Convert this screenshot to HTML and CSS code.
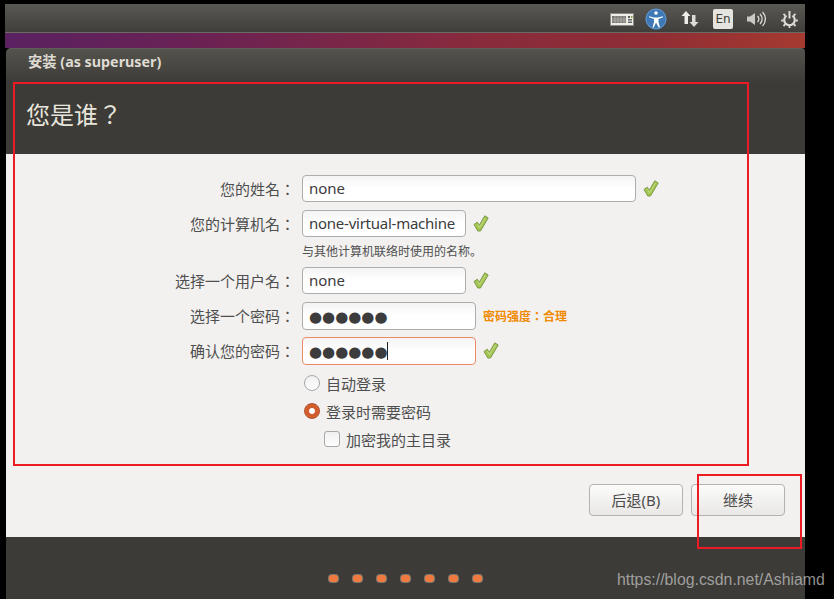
FILE: index.html
```html
<!DOCTYPE html>
<html lang="zh-Hant">
<head>
<meta charset="utf-8">
<title>安装</title>
<link rel="stylesheet" href="styles.css">
</head>
<body>
<div class="screen">
  <header class="panel">
    <svg class="ico kbd" viewBox="0 0 24 13"><rect x=".5" y=".5" width="23" height="12" fill="#eeede8" stroke="#8a8983"/><rect x="2" y="3" width="14" height="7" fill="#77766f"/><path d="M2 6h14M2 8h14M5 3v7M8 3v7M11 3v7M14 3v7" stroke="#c8c7c0" stroke-width=".6"/><rect x="18" y="3" width="2" height="2" fill="#555"/><rect x="21" y="3" width="1.500" height="2" fill="#7fa040"/><rect x="18" y="6" width="4" height="1.500" fill="#666"/><rect x="18" y="8.500" width="4" height="1.500" fill="#666"/></svg>
    <svg class="ico a11y" viewBox="0 0 22 22"><circle cx="11" cy="11" r="10.500" fill="#3f79b5"/><circle cx="11" cy="11" r="10" fill="none" stroke="#6ea0d2" stroke-width=".8"/><circle cx="11" cy="5" r="1.800" fill="#fff"/><path d="M4 8.200l5 1.300h4l5-1.300v1l-4.500 1.800v3l1.500 5.500h-1.300L11 14.500 8.800 19.500H7.500L9 14v-3L4 9.200z" fill="#fff"/></svg>
    <svg class="ico arrows" viewBox="0 0 18 18"><path d="M5 1l4.500 5H7v8H3.500V6H.5z" fill="#eeede8"/><path d="M13 17l-4.500-5H11V5h3.500v7h3z" fill="#dedcd6"/></svg>
    <span class="lang">En</span>
    <svg class="ico vol" viewBox="0 0 20 18"><path d="M1 6.500h3L9 3v12l-5-3.500H1z" fill="#c9c8c2"/><path d="M11.500 6a4 4 0 0 1 0 6M14 4a7 7 0 0 1 0 10M16.500 2a10 10 0 0 1 0 14" fill="none" stroke="#dedcd6" stroke-width="1.300"/></svg>
    <svg class="ico pow" viewBox="0 0 17 17"><path d="M5.500 4.600a5.300 5.300 0 1 0 6 0" fill="none" stroke="#dedcd6" stroke-width="2.200"/><path d="M8.500 0v7.500" stroke="#dedcd6" stroke-width="2"/><path d="M2.500 2.800l1.800 1.800M14.500 2.800l-1.800 1.800M.2 9.500h2M14.800 9.500h2M2.500 15l1.800-1.800M14.500 15l-1.800-1.800M8.500 15v2" stroke="#dedcd6" stroke-width="1.800"/></svg>
  </header>
  <div class="wallpaper"></div>
  <div class="window">
    <div class="head">
      <div class="title">安装 (as superuser)</div>
      <h1 class="heading">您是谁？</h1>
    </div>
    <main class="body">
      <form class="form">
        <div class="row">
          <label class="label">您的姓名：</label>
          <div class="input w-full">none</div>
          <svg class="check" viewBox="0 0 16 17"><use href="#tick"/></svg>
        </div>
        <div class="row">
          <label class="label">您的计算机名：</label>
          <div class="input w-mid compact">none-virtual-machine</div>
          <svg class="check" viewBox="0 0 16 17"><use href="#tick"/></svg>
        </div>
        <p class="hint" lang="zh-Hans">与其他计算机联络时使用的名称。</p>
        <div class="row">
          <label class="label">选择一个用户名：</label>
          <div class="input w-mid">none</div>
          <svg class="check" viewBox="0 0 16 17"><use href="#tick"/></svg>
        </div>
        <div class="row tight">
          <label class="label">选择一个密码：</label>
          <div class="input w-pass dots">●●●●●●</div>
          <span class="strength">密码强度：合理</span>
        </div>
        <div class="row tight">
          <label class="label">确认您的密码：</label>
          <div class="input w-pass dots focus">●●●●●●<span class="caret"></span></div>
          <svg class="check up" viewBox="0 0 16 17"><use href="#tick"/></svg>
        </div>
        <div class="option first"><span class="radio"></span><span>自动登录</span></div>
        <div class="option"><span class="radio on"></span><span>登录时需要密码</span></div>
        <div class="option sub"><span class="box"></span><span>加密我的主目录</span></div>
      </form>
      <div class="actions">
        <button class="btn" type="button">后退(B)</button>
        <button class="btn" type="button">继续</button>
      </div>
    </main>
    <footer class="foot">
      <i class="dot"></i><i class="dot"></i><i class="dot"></i><i class="dot"></i><i class="dot"></i><i class="dot"></i><i class="dot"></i>
    </footer>
  </div>
</div>
<div class="mark mark-a"></div>
<div class="mark mark-b"></div>
<div class="water">https://blog.csdn.net/Ashiamd</div>
<svg class="defs" width="0" height="0"><defs><g id="tick"><path d="M1 9.500l3.300-2.300 2 3L11.800.8l3.400 2.200L7.500 16H4.800z" fill="#a3c553" stroke="#7d9a45" stroke-width="1" stroke-linejoin="round"/><path d="M4.500 9.200l2 3.500L12.500 3" fill="none" stroke="#c6dc82" stroke-width="1"/></g></defs></svg>
</body>
</html>
```
FILE: styles.css
```css
* { box-sizing: border-box; }
html, body { margin: 0; height: 599px; overflow: hidden; }
body {
  background: #000;
  padding: 4px 0 0 5px;
  font-family: "Noto Sans", "Noto Sans CJK TC", sans-serif;
  color: #4c4c4c;
}
.screen { width: 800px; height: 595px; display: flex; flex-direction: column; }

.panel {
  height: 29px;
  flex: none;
  display: flex;
  align-items: center;
  padding-top: 2px;
  background: linear-gradient(#595853, #3f3e3a);
  border-bottom: 1px solid #6a6963;
}
.ico { display: block; flex: none; }
.kbd { width: 24px; height: 13px; margin-left: 605px; }
.a11y { width: 22px; height: 22px; margin-left: 11px; }
.arrows { width: 18px; height: 18px; margin-left: 14px; }
.lang {
  width: 20px; height: 20px; margin-left: 14px;
  background: #e6e4de; border-radius: 2px;
  color: #3c3b37; font: 12px/20px "DejaVu Sans", sans-serif; text-align: center;
}
.vol { width: 20px; height: 18px; margin-left: 13px; }
.pow { width: 17px; height: 17px; margin-left: 15px; }

.wallpaper {
  height: 15px;
  flex: none;
  background: linear-gradient(90deg, #5a2161 0%, #6b2253 25%, #8a2b3c 60%, #8e2d35 80%, #a53a30 100%);
}
.window { flex: 1; display: flex; flex-direction: column; min-height: 0; margin-left: 1px; }
.head {
  height: 106px;
  flex: none;
  border-radius: 5px 4px 0 0;
  background: linear-gradient(#54534e 0, #3c3b37 34px, #3c3b37 100%);
  border-top: 1px solid #5f5e59;
  padding: 3px 0 0 22px;
}
.title { font-size: 14.3px; line-height: 20px; font-weight: 700; color: #dfdbd2; white-space: nowrap; }
.heading {
  margin: 26px 0 0 -2px;
  font-size: 24px;
  line-height: 34px;
  font-weight: 400;
  color: #e8e5dc;
}
.body {
  height: 383px;
  flex: none;
  background: #f2f1f0;
  padding: 21px 20px 21px 0;
  display: flex;
  flex-direction: column;
  justify-content: space-between;
}
.form { display: flex; flex-direction: column; }
.row { display: flex; align-items: center; margin-bottom: 8px; }
.row.tight { margin-bottom: 7px; }
.label {
  width: 289px;
  flex: none;
  margin-right: 7px;
  text-align: right;
  font-size: 15px;
  line-height: 20px;
  color: #4f4f4f;
  white-space: nowrap;
}
.input {
  height: 27px;
  flex: none;
  padding: 0 6px;
  border: 1px solid #adadad;
  border-radius: 4px;
  background: linear-gradient(#f4f4f4, #fff 50%);
  font-size: 15px;
  line-height: 25px;
  color: #3c3c3c;
  white-space: nowrap;
}
.compact { letter-spacing: -.25px; }
.w-full { width: 334px; }
.w-mid { width: 164px; }
.w-pass { width: 174px; height: 28px; }
.dots {
  font-family: "DejaVu Sans", sans-serif;
  font-size: 15px;
  line-height: 26px;
  padding-top: 1px;
  display: flex;
  color: #3c3c3c;
}
.focus { border-color: #ec8a66; }
.caret { width: 1px; height: 18px; margin: 3px 0 0 -1px; background: #222; }
.check { width: 16px; height: 17px; margin-left: 7px; flex: none; }
.check.up { margin-top: -2px; }
.strength { margin-left: 7px; font-size: 12px; font-weight: 700; color: #f08a00; white-space: nowrap; }
.hint {
  margin: -1px 0 7px 296px;
  font-family: "Noto Sans", "Noto Sans CJK SC", sans-serif;
  font-size: 12px;
  line-height: 16px;
  color: #4f4f4f;
  white-space: nowrap;
}
.option {
  display: flex;
  align-items: center;
  height: 28px;
  padding-left: 296px;
  font-size: 15px;
  color: #4f4f4f;
  white-space: nowrap;
}
.option.first { margin-top: -3px; }
.radio {
  width: 16px; height: 16px; margin: 0 6px 0 2px; flex: none;
  border-radius: 50%;
  border: 1px solid #a8a8a8;
  background: linear-gradient(#f0f0f0, #fff);
}
.radio.on {
  border-color: #b04f26;
  background: radial-gradient(circle, #fff 0 2.500px, #cf5a2b 3.500px, #d8693a 100%);
}
.sub { padding-left: 318px; }
.box {
  width: 16px; height: 16px; margin: 0 6px 0 0; flex: none;
  border: 1px solid #a8a8a8;
  border-radius: 3px;
  background: linear-gradient(#f0f0f0, #fdfdfd);
}
.actions { display: flex; justify-content: flex-end; gap: 8px; }
.btn {
  width: 94px;
  height: 32px;
  padding: 0;
  border: 1px solid #b4b2ae;
  border-radius: 4px;
  background: linear-gradient(#fbfbfa, #e9e8e6);
  font: 15px/30px "Noto Sans", "Noto Sans CJK TC", sans-serif;
  color: #4c4c4c;
}
.foot {
  flex: 1;
  background: #3c3b37;
  display: flex;
  justify-content: center;
  gap: 15px;
  padding: 38px 0 0 0;
}
.dot {
  width: 9px; height: 7px;
  border-radius: 3px;
  background: #ee7a3f;
  box-shadow: 0 0 0 1px rgba(190,180,170,.5);
}
.mark { position: absolute; border: 2px solid #ed1c24; pointer-events: none; }
.mark-a { left: 13px; top: 82px; width: 736px; height: 384px; }
.mark-b { left: 697px; top: 474px; width: 105px; height: 75px; }
.water {
  position: absolute;
  left: 617px; top: 570px;
  font: 15.85px/20px "Liberation Sans", sans-serif;
  color: rgba(200,200,200,.72);
}
.defs { position: absolute; }
```
